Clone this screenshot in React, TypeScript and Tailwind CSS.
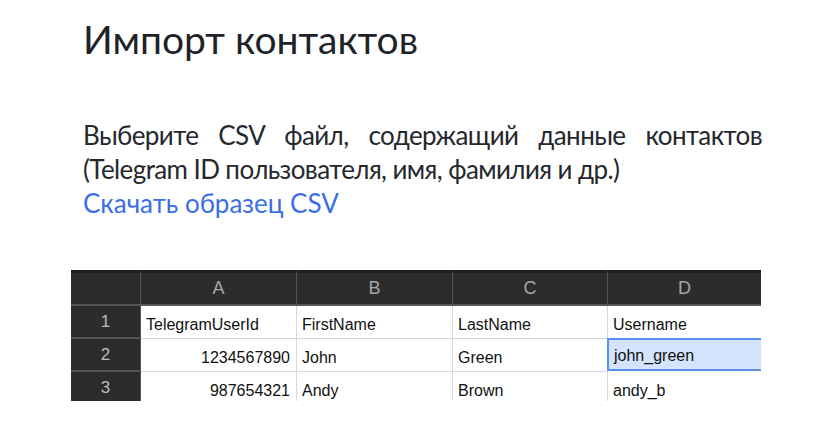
import React from "react";

const cols = ["A", "B", "C", "D"];
const rows: { n: string; cells: string[] }[] = [
  { n: "1", cells: ["TelegramUserId", "FirstName", "LastName", "Username"] },
  { n: "2", cells: ["1234567890", "John", "Green", "john_green"] },
  { n: "3", cells: ["987654321", "Andy", "Brown", "andy_b"] },
];

export default function App() {
  return (
    <div className="w-[813px] h-[427px] bg-white overflow-hidden relative" style={{ fontFamily: "Lato, 'Noto Sans', sans-serif" }}>
      <div className="pl-[83px] pr-[51px] pt-[15px]">
        <h1 className="text-[39px] leading-[48px] text-[#1f2329] font-normal">Импорт контактов</h1>
        <p className="mt-[55px] text-[26px] leading-[34px] tracking-[-0.6px] text-[#25282d] text-justify [text-align-last:left]">
          Выберите CSV файл, содержащий данные контактов (Telegram ID пользователя, имя, фамилия и др.)
        </p>
        <div className="text-[26px] leading-[34px] text-[#3a6ee8]">Скачать образец CSV</div>
      </div>
      <div
        className="mt-[50px] ml-[71px] w-[690px] h-[131px] overflow-hidden grid grid-cols-[70px_156px_156px_155px_153px] content-start"
        style={{ fontFamily: "'Liberation Sans', Arial, sans-serif" }}
      >
        <div className="h-[36px] bg-[#2c2c2c] border-r border-b-2 border-[#555] border-t-[3px] border-t-[#1e1e1e]" />
        {cols.map((c, i) => (
          <div
            key={c}
            className={`h-[36px] bg-[#2c2c2c] border-b-2 border-[#555] border-t-[3px] border-t-[#1e1e1e] flex items-center justify-center text-[18px] text-[#a6a6a6] ${i < 3 ? "border-r" : ""}`}
          >
            {c}
          </div>
        ))}
        {rows.map((r, ri) => (
          <React.Fragment key={r.n}>
            <div className="h-[33px] bg-[#2c2c2c] border-r border-b-2 border-[#555] flex items-center justify-center text-[17px] text-[#bdbdbd]">
              {r.n}
            </div>
            {r.cells.map((cell, ci) => {
              const selected = ri === 1 && ci === 3;
              const num = ri > 0 && ci === 0;
              return (
                <div
                  key={ci}
                  className={`h-[33px] flex items-end pb-[1px] text-[16px] text-[#111] ${
                    num ? "justify-end pr-[6px]" : "pl-[5px]"
                  } ${
                    selected
                      ? "bg-[#d4e4fc] border-y-2 border-l-2 border-[#5b8def] -mt-[1px] -ml-[1px]"
                      : `border-b border-[#d9d9d9] ${ci < 3 ? "border-r" : ""}`
                  }`}
                >
                  {cell}
                </div>
              );
            })}
          </React.Fragment>
        ))}
      </div>
    </div>
  );
}
